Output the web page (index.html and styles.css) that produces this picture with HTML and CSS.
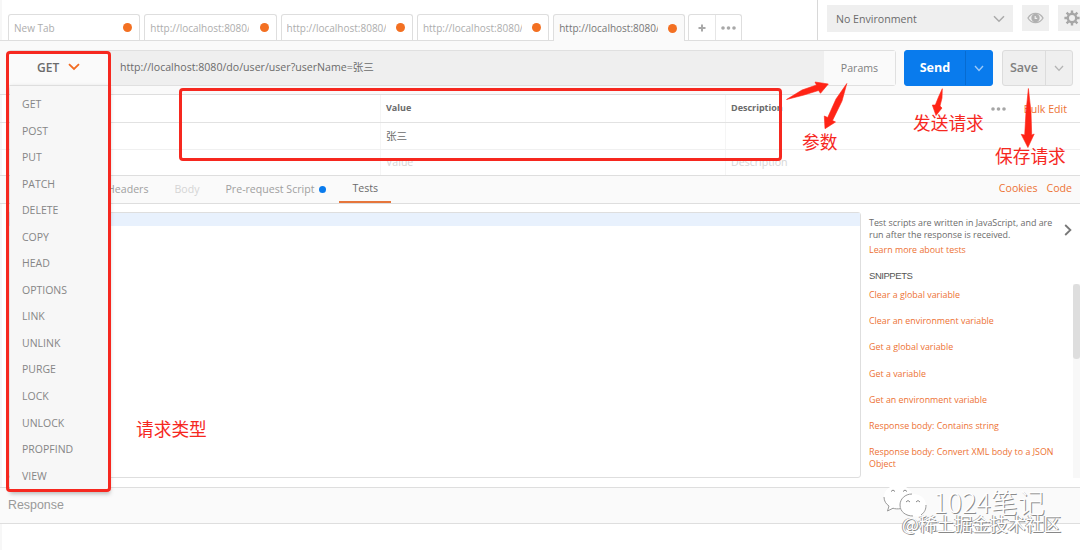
FILE: index.html
```
<!DOCTYPE html>
<html lang="en">
<head>
    <meta charset="UTF-8">
    <meta name="viewport" content="width=device-width, initial-scale=1.0">
    <title>Request builder</title>
    <link rel="stylesheet" href="styles.css">
</head>
<body>
    <div class="app">
        <header class="topbar">
            <div class="tabs">
                <div class="tab"><span class="tab-name">New Tab</span><i class="dot"></i></div>
                <div class="tab"><span class="tab-name">http://localhost:8080/do</span><i class="dot"></i></div>
                <div class="tab"><span class="tab-name">http://localhost:8080/do</span><i class="dot"></i></div>
                <div class="tab"><span class="tab-name">http://localhost:8080/do</span><i class="dot"></i></div>
                <div class="tab active"><span class="tab-name">http://localhost:8080/do</span><i class="dot"></i></div>
                <div class="tab-tools">
                    <button class="tool">
                        <svg width="8" height="8" viewBox="0 0 8 8"><path d="M4 0.5V7.5M0.5 4H7.5" stroke="#a8a8a8" stroke-width="2"/></svg>
                    </button>
                    <button class="tool">
                        <svg width="15" height="4" viewBox="0 0 15 4" fill="#a8a8a8"><circle cx="2" cy="2" r="1.8"/><circle cx="7.5" cy="2" r="1.8"/><circle cx="13" cy="2" r="1.8"/></svg>
                    </button>
                </div>
            </div>
            <div class="environment">
                <div class="env-select">
                    <span>No Environment</span>
                    <svg width="12" height="8" viewBox="0 0 12 8"><path d="M1 1.2L6 6.2L11 1.2" fill="none" stroke="#aaa" stroke-width="1.5"/></svg>
                </div>
                <button class="env-button">
                    <svg width="17" height="12" viewBox="0 0 17 12"><path d="M1 6C4.5 -0.2 12.5 -0.2 16 6C12.5 12.2 4.5 12.2 1 6Z" fill="none" stroke="#b4b4b4" stroke-width="1.4"/><circle cx="8.5" cy="6" r="4.2" fill="#b0b0b0"/><path d="M8.2 4V6.4H10.2" fill="none" stroke="#eee" stroke-width="1.2"/></svg>
                </button>
                <button class="env-button gear">
                    <svg width="16" height="16" viewBox="0 0 16 16"><g stroke="#a6a6a6" fill="none"><circle cx="8" cy="8" r="4.2" stroke-width="2.4"/><path d="M8 0.4V3M8 13V15.6M0.4 8H3M13 8H15.6M2.6 2.6L4.5 4.5M11.5 11.5L13.4 13.4M2.6 13.4L4.5 11.5M11.5 4.5L13.4 2.6" stroke-width="2.4"/></g></svg>
                </button>
            </div>
        </header>

        <section class="request-bar">
            <div class="url-box">
                <div class="method">
                    <span>GET</span>
                    <svg width="12" height="8" viewBox="0 0 12 8"><path d="M1 1.2L6 6L11 1.2" fill="none" stroke="#f26b21" stroke-width="1.8"/></svg>
                    <ul class="method-menu">
                        <li>GET</li>
                        <li>POST</li>
                        <li>PUT</li>
                        <li>PATCH</li>
                        <li>DELETE</li>
                        <li>COPY</li>
                        <li>HEAD</li>
                        <li>OPTIONS</li>
                        <li>LINK</li>
                        <li>UNLINK</li>
                        <li>PURGE</li>
                        <li>LOCK</li>
                        <li>UNLOCK</li>
                        <li>PROPFIND</li>
                        <li>VIEW</li>
                    </ul>
                </div>
                <div class="url">http://localhost:8080/do/user/user?userName=张三</div>
                <div class="params">Params</div>
            </div>
            <div class="split send">
                <span>Send</span>
                <i><svg width="10" height="7" viewBox="0 0 10 7"><path d="M1 1L5 5.4L9 1" fill="none" stroke="#9cc9f8" stroke-width="1.4"/></svg></i>
            </div>
            <div class="split save">
                <span>Save</span>
                <i><svg width="10" height="7" viewBox="0 0 10 7"><path d="M1 1L5 5.4L9 1" fill="none" stroke="#b4b4b4" stroke-width="1.3"/></svg></i>
            </div>
        </section>

        <section class="params-table">
            <div class="row head">
                <div></div>
                <div>Value</div>
                <div>Description</div>
                <div class="row-tools">
                    <svg width="15" height="4" viewBox="0 0 15 4" fill="#a6a6a6"><circle cx="2" cy="2" r="1.8"/><circle cx="7.5" cy="2" r="1.8"/><circle cx="13" cy="2" r="1.8"/></svg>
                    <a class="bulk">Bulk Edit</a>
                </div>
            </div>
            <div class="row">
                <div></div>
                <div>张三</div>
                <div></div>
                <div></div>
            </div>
            <div class="row blank">
                <div></div>
                <div>Value</div>
                <div>Description</div>
                <div></div>
            </div>
        </section>

        <nav class="sections">
            <span class="section">Headers</span>
            <span class="section disabled">Body</span>
            <span class="section">Pre-request Script <i class="dot blue"></i></span>
            <span class="section current">Tests</span>
            <div class="section-links"><a>Cookies</a><a>Code</a></div>
        </nav>

        <main class="workspace">
            <div class="editor"><div class="editor-line"></div></div>
            <aside class="snippets">
                <p>Test scripts are written in JavaScript, and are run after the response is received.</p>
                <a class="learn">Learn more about tests</a>
                <h2>SNIPPETS</h2>
                <ul>
                    <li>Clear a global variable</li>
                    <li>Clear an environment variable</li>
                    <li>Get a global variable</li>
                    <li>Get a variable</li>
                    <li>Get an environment variable</li>
                    <li>Response body: Contains string</li>
                    <li>Response body: Convert XML body to a JSON Object</li>
                </ul>
            </aside>
            <div class="rail">
                <svg width="8" height="12" viewBox="0 0 8 12"><path d="M1.2 1L6.4 6L1.2 11" fill="none" stroke="#777" stroke-width="1.8"/></svg>
                <div class="track"><div class="thumb"></div></div>
            </div>
        </main>

        <footer class="response">Response</footer>

        <!-- notes on top of the page -->
        <div class="frame frame-method"></div>
        <div class="frame frame-params"></div>
        <svg class="arrows" width="1080" height="550" viewBox="0 0 1080 550" fill="#ff2416" stroke="#ff2416" stroke-width="0.6" stroke-linejoin="round">
            <path d="M786.5 99.5L802 90L816.5 85L815 82L828.3 84L820.5 93.3L818.5 90.5L804 95Z"/>
            <path d="M846.8 83.5L842 101L832.5 120.5L835.5 122L825 128.7L824.3 116L827.7 117.5L836 99Z"/>
            <path d="M942.3 88.7L942 98L940 106L942 108L936 115.5L932.3 105L935.3 105L938.5 97Z"/>
            <path d="M1028.4 88.5L1031 112L1031.7 135L1034.2 134L1027.9 147.5L1021.2 134.3L1024.7 135L1026 112Z"/>
        </svg>
        <div class="note note-params">参数</div>
        <div class="note note-send">发送请求</div>
        <div class="note note-save">保存请求</div>
        <div class="note note-method">请求类型</div>

        <div class="brand">
            <svg width="44" height="34" viewBox="0 0 44 34">
                <path d="M15 1C7 1 1 6 1 13C1 17 3 20 6 22L4.5 27L10 24.2C12 25 15 25 18 25L30 13C29 6 23 1 15 1Z" fill="#fff"/>
                <path d="M1 13C1 17 3 20 6 22L4.5 27L10 24.2C12 25 15 25 17 24.7" fill="none" stroke="#999" stroke-width="1"/>
                <path d="M8 7.5Q10 4.5 12 7.5M20 7.5Q22 4.5 24 7.5" fill="none" stroke="#888"/>
                <path d="M30 10C22 10 17 15 17 21C17 28 23 32 30 32L38 33V30C42 28 43 25 43 21C43 15 38 10 30 10Z" fill="#fff"/>
                <path d="M29 10C22 10 17 15 17 21C17 28 23 32 30 32M38 31C42 28 43 25 43 21" fill="none" stroke="#999"/>
                <path d="M23 18Q25 15 27 18M33 18Q35 15 37 18" fill="none" stroke="#888"/>
            </svg>
            <span>1024笔记</span>
        </div>
        <div class="credit">@稀土掘金技术社区</div>
    </div>
</body>
</html>
```
FILE: styles.css
```
* {
    box-sizing: border-box;
}

body {
    margin: 0;
    background: #fff;
    color: #6b6b6b;
    font-family: "Open Sans", "Noto Sans CJK SC", sans-serif;
    font-size: 10.6px;
}

ul, p, h2 {
    margin: 0;
    padding: 0;
    list-style: none;
}

svg {
    display: block;
}

button {
    border: 0;
    padding: 0;
    background: none;
}

.app {
    position: relative;
    width: 1080px;
    height: 550px;
    overflow: hidden;
    display: flex;
    flex-direction: column;
    box-shadow: inset 2px 0 0 #f7f7f7;
}

/* top bar */
.topbar {
    flex: 0 0 41px;
    display: flex;
    border-bottom: 1px solid #dedede;
}

.tabs {
    flex: 0 0 817px;
    display: flex;
    gap: 4px;
    padding: 14px 0 0 8px;
}

.tab {
    width: 132.3px;
    height: 26px;
    display: flex;
    align-items: center;
    justify-content: space-between;
    padding: 0 7px 0 5px;
    border: 1px solid #dedede;
    border-bottom: 0;
    border-radius: 3px 3px 0 0;
    color: #adadad;
    font-size: 10px;
}

.tab-name {
    width: 99px;
    overflow: hidden;
    white-space: nowrap;
}

.tab.active {
    height: 27px;
    margin-bottom: -1px;
    background: #fafafa;
    color: #777;
}

.dot {
    width: 9px;
    height: 9px;
    border-radius: 50%;
    background: #f37022;
}

.tab-tools {
    display: flex;
    margin-left: -1px;
    border: 1px solid #dedede;
    border-bottom: 0;
    border-radius: 3px 3px 0 0;
}

.tool {
    width: 26px;
    display: flex;
    align-items: center;
    justify-content: center;
}

.tool + .tool {
    border-left: 1px solid #e6e6e6;
}

.environment {
    flex: 1;
    display: flex;
    gap: 9px;
    padding: 5px 0 0 9px;
    border-left: 1px solid #d8d8d8;
    overflow: hidden;
}

.env-select {
    flex: 0 0 186px;
    height: 27px;
    display: flex;
    align-items: center;
    justify-content: space-between;
    padding: 0 8px 0 9px;
    background: #efefef;
}

.env-button {
    flex: 0 0 27px;
    height: 26px;
    display: flex;
    align-items: center;
    justify-content: center;
    background: #efefef;
}

/* method, url and buttons */
.request-bar {
    flex: 0 0 54px;
    display: flex;
    padding: 9px 7px 8px 8px;
    background: #fafafa;
    border-bottom: 1px solid #dedede;
}

.url-box {
    width: 888px;
    height: 36px;
    display: flex;
    margin-right: 8px;
    background: #efefef;
    border: 1px solid #e0e0e0;
    border-radius: 3px;
}

.method {
    position: relative;
    flex: 0 0 101px;
    display: flex;
    align-items: center;
    gap: 9px;
    padding: 0 0 2px 28px;
    background: #fafafa;
    font-size: 12px;
    font-weight: 600;
}

.method-menu {
    position: absolute;
    z-index: 2;
    top: 34px;
    left: 1px;
    width: 100px;
    height: 407px;
    padding-top: 5px;
    background: #f7f7f7;
    border-top: 1px solid #dedede;
    box-shadow: 0 2px 4px rgba(0, 0, 0, 0.25);
}

.method-menu li {
    height: 26.55px;
    padding-left: 12px;
    line-height: 26px;
    color: #868686;
    font-size: 10.5px;
    font-weight: 400;
}

.url {
    flex: 1;
    padding-left: 10px;
    line-height: 33px;
}

.params {
    flex: 0 0 71px;
    line-height: 34px;
    text-align: center;
    background: #fafafa;
    color: #808080;
}

.split {
    display: flex;
    height: 36px;
    border-radius: 3px;
    font-size: 12.6px;
    line-height: 34px;
    text-align: center;
    border: 1px solid #dcdcdc;
    background: #efefef;
}

.split span {
    flex: 1;
}

.split i {
    width: 27px;
    display: flex;
    align-items: center;
    justify-content: center;
    border-left: 1px solid #dcdcdc;
}

.send {
    width: 89px;
    margin-right: 9px;
    background: #097bed;
    border-color: #097bed;
    color: #fff;
    font-weight: 700;
}

.send i {
    border-color: #066bd1;
}

.save {
    width: 71px;
    font-weight: 600;
    color: #808080;
}

/* params table */
.params-table {
    flex: 0 0 81px;
    border-bottom: 1px solid #dedede;
}

.row {
    height: 27px;
    display: grid;
    grid-template-columns: 380px 345px 231px 1fr;
    line-height: 26px;
    border-bottom: 1px solid #f0f0f0;
}

.row > div {
    padding-left: 5px;
}

.row > div:nth-child(2),
.row > div:nth-child(3) {
    border-left: 1px solid #f5f5f5;
}

.row.head {
    height: 28px;
    font-size: 9px;
    font-weight: 700;
    border-bottom-color: #e2e2e2;
}

.row.blank {
    height: 25px;
    line-height: 24px;
    color: #d6d6d6;
    border-bottom: 0;
}

.row .row-tools {
    display: flex;
    align-items: center;
    justify-content: space-between;
    padding: 0 13px 0 35px;
    font-size: 10.6px;
    font-weight: 400;
}

a,
.snippets li {
    color: #ed7234;
}

/* request sections */
.sections {
    flex: 0 0 28px;
    display: flex;
    padding-left: 94px;
    background: #fafafa;
    border-bottom: 1px solid #dedede;
    line-height: 25px;
    color: #a0a0a0;
}

.section {
    display: flex;
    align-items: center;
    gap: 5px;
    padding: 0 13px;
}

.section.disabled {
    color: #d5d5d5;
}

.section.current {
    color: #6b6b6b;
    padding-bottom: 0;
    border-bottom: 2px solid #e6763c;
}

.dot.blue {
    width: 7px;
    height: 7px;
    background: #097bed;
}

.section-links {
    display: flex;
    gap: 9px;
    margin-left: auto;
    padding-right: 8px;
}

/* editor and snippets */
.workspace {
    flex: 0 0 283px;
    min-height: 0;
    display: flex;
    padding: 8px 0 9px 8px;
}

.editor {
    width: 853px;
    border: 1px solid #dedede;
    border-radius: 3px;
}

.editor-line {
    height: 13px;
    background: #e8f1fd;
}

.snippets {
    width: 197px;
    padding: 5px 0 0 8px;
    font-size: 8.9px;
    line-height: 12px;
    overflow: hidden;
}

.learn {
    display: block;
    margin-top: 3px;
}

.snippets h2 {
    margin: 14px 0 7px;
    font: 400 9.5px/12px "Liberation Sans", sans-serif;
    letter-spacing: -0.45px;
    color: #555;
}

.snippets li {
    margin-bottom: 14.2px;
}

.rail {
    flex: 1;
    display: flex;
    flex-direction: column;
    align-items: flex-end;
    padding-top: 12px;
}

.rail svg {
    margin-right: 8px;
}

.track {
    flex: 1;
    width: 7px;
    margin-top: 48px;
    background: #f8f8f8;
}

.thumb {
    height: 75px;
    background: #dedede;
    border-radius: 3px;
}

.response {
    flex: 0 0 37px;
    padding-left: 8px;
    background: #fafafa;
    border-top: 1px solid #dedede;
    border-bottom: 1px solid #dedede;
    color: #999;
    font: 12.4px/34px "Liberation Sans", sans-serif;
}

/* notes */
.frame {
    position: absolute;
    z-index: 3;
    border: 3px solid #f6281f;
    border-radius: 4px;
}

.frame-method {
    left: 6px;
    top: 51px;
    width: 105px;
    height: 441px;
}

.frame-params {
    left: 179px;
    top: 88px;
    width: 603px;
    height: 73px;
}

.arrows {
    position: absolute;
    z-index: 3;
    left: 0;
    top: 0;
}

.note {
    position: absolute;
    z-index: 3;
    color: #f6281f;
    font-family: "Noto Sans CJK SC", sans-serif;
    font-size: 17.7px;
    line-height: 24px;
    white-space: nowrap;
}

.note-params {
    left: 802px;
    top: 129px;
}

.note-send {
    left: 913px;
    top: 110px;
}

.note-save {
    left: 995px;
    top: 143px;
}

.note-method {
    left: 136px;
    top: 416px;
}

.brand {
    position: absolute;
    left: 883px;
    top: 484px;
    display: flex;
    gap: 6px;
    color: #fff;
    font: 300 27px/36px "Noto Sans CJK SC", sans-serif;
    text-shadow: 1px 1px 0 #8c8c8c;
    white-space: nowrap;
}

.credit {
    position: absolute;
    left: 902px;
    top: 511px;
    color: #fff;
    font: 17.8px/24px "Noto Sans CJK SC", sans-serif;
    text-shadow: -1px 0 0 #999, 1px 1px 0 #888;
    white-space: nowrap;
}
```
